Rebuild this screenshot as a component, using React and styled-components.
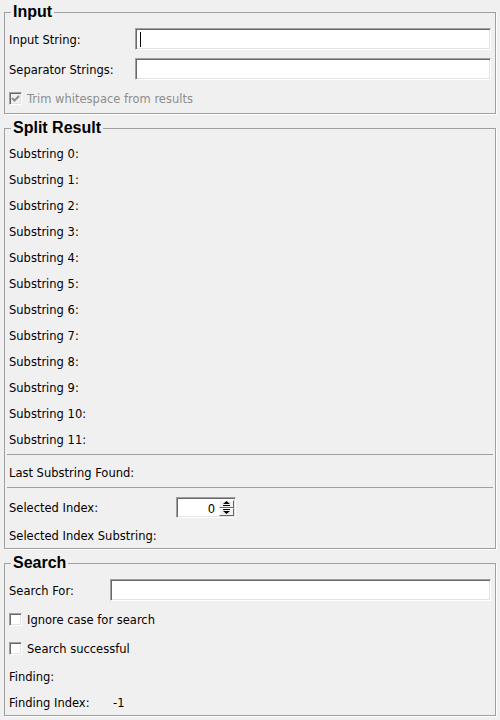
import styled, { createGlobalStyle } from 'styled-components';

const GlobalStyle = createGlobalStyle`
 html, body {
  margin: 0;
  background: #f0f0f0;
 }
 body {
  font-family: 'DejaVu Sans', 'Liberation Sans', sans-serif;
  font-size: 11.5px;
  color: #000;
 }
`;

const Page = styled.div`
 width: 500px;
 height: 720px;
 overflow: hidden;
 padding-top: 3px;
 box-sizing: border-box;
`;

/* group box with an etched border */
const Group = styled.fieldset`
 margin: ${({ $mt }) => $mt || 0}px 4px 0;
 padding: 3px 0 ${({ $pb }) => $pb || 0}px;
 min-width: 0;
 border: 1px solid #a0a0a0;
 box-shadow: 1px 1px 0 #fff;
`;

const Legend = styled.legend`
 font-family: 'Liberation Sans', Arial, sans-serif;
 font-weight: 700;
 font-size: 16px;
 line-height: 18px;
 padding: 0 2px;
 margin-left: 6px;
`;

const Row = styled.div`
 display: flex;
 align-items: center;
 height: ${({ $h }) => $h || 26}px;
 padding-left: 4px;
 padding-right: 4px;
 white-space: nowrap;
`;

const Label = styled.span`
 width: ${({ $w }) => ($w ? `${$w}px` : 'auto')};
 flex-shrink: 0;
 margin-top: 2px;
`;

const Sunken = styled.div`
 box-sizing: border-box;
 background: #fff;
 border: 1px solid;
 border-color: #a0a0a0 #fff #fff #a0a0a0;
 box-shadow: inset 1px 1px 0 #696969, inset -1px -1px 0 #e3e3e3;
`;

const Field = styled(Sunken)`
 flex: 1;
 height: 22px;
 display: flex;
 align-items: center;
 padding-left: 4px;
`;

const Caret = styled.span`
 width: 1px;
 height: 15px;
 background: #000;
`;

const Box = styled(Sunken)`
 width: 13px;
 height: 13px;
 flex-shrink: 0;
 margin-right: 5px;
 display: flex;
 align-items: center;
 justify-content: center;
 background: ${({ $disabled }) => ($disabled ? '#f0f0f0' : '#fff')};
`;

const CheckText = styled.span`
 margin-top: 2px;
 color: ${({ $disabled }) => ($disabled ? '#8d8d8d' : '#000')};
`;

const Divider = styled.hr`
 margin: 2px 2px ${({ $mb }) => $mb || 0}px;
 border: 0;
 height: 1px;
 background: #a0a0a0;
`;

const Spin = styled(Sunken)`
 width: 60px;
 height: 21px;
 display: flex;
 padding: 2px 1px 1px 2px;
`;

const SpinValue = styled.span`
 flex: 1;
 text-align: right;
 padding-right: 4px;
 line-height: 18px;
`;

const SpinButtons = styled.div`
 width: 15px;
 display: flex;
 flex-direction: column;
`;

const SpinButton = styled.div`
 flex: 1;
 box-sizing: border-box;
 background: #f0f0f0;
 border: 1px solid;
 border-color: #fff #696969 #696969 #fff;
 display: flex;
 align-items: center;
 justify-content: center;
`;

const Value = styled.span`
 margin-top: 2px;
`;

const Check = ({ checked, disabled, h = 28, children }) => (
 <Row $h={h}>
  <Box $disabled={disabled}>
   {checked && (
    <svg width="9" height="9" viewBox="0 0 9 9">
     <polyline points="1,4 3.5,6.5 8,2" fill="none" stroke={disabled ? '#8d8d8d' : '#000'} strokeWidth="2" />
    </svg>
   )}
  </Box>
  <CheckText $disabled={disabled}>{children}</CheckText>
 </Row>
);

const App = () => {
 const substrings = Array.from({ length: 12 }, (_, i) => i);
 return (
  <Page>
   <GlobalStyle />
   <Group $mt={0} $pb={1}>
    <Legend>Input</Legend>
    <Row $h={30}>
     <Label $w={126}>Input String:</Label>
     <Field>
      <Caret />
     </Field>
    </Row>
    <Row $h={30}>
     <Label $w={126}>Separator Strings:</Label>
     <Field />
    </Row>
    <Check checked disabled>
     Trim whitespace from results
    </Check>
   </Group>

   <Group $mt={5}>
    <Legend>Split Result</Legend>
    {substrings.map((i) => (
     <Row key={i}>
      <Label>Substring {i}:</Label>
     </Row>
    ))}
    <Divider $mb={4} />
    <Row>
     <Label>Last Substring Found:</Label>
    </Row>
    <Divider $mb={4} />
    <Row $h={30}>
     <Label $w={167}>Selected Index:</Label>
     <Spin>
      <SpinValue>0</SpinValue>
      <SpinButtons>
       <SpinButton>
        <svg width="7" height="5" viewBox="0 0 7 5">
         <polygon points="3.5,0 7,3 0,3" fill="#000" />
         <rect x="0" y="4" width="7" height="1" fill="#000" />
        </svg>
       </SpinButton>
       <SpinButton>
        <svg width="7" height="5" viewBox="0 0 7 5">
         <rect x="0" y="0" width="7" height="1" fill="#000" />
         <polygon points="0,2 7,2 3.5,5" fill="#000" />
        </svg>
       </SpinButton>
      </SpinButtons>
     </Spin>
    </Row>
    <Row>
     <Label>Selected Index Substring:</Label>
    </Row>
   </Group>

   <Group $mt={5}>
    <Legend>Search</Legend>
    <Row $h={30}>
     <Label $w={101}>Search For:</Label>
     <Field />
    </Row>
    <Check>Ignore case for search</Check>
    <Check h={30}>Search successful</Check>
    <Row>
     <Label>Finding:</Label>
    </Row>
    <Row>
     <Label $w={104}>Finding Index:</Label>
     <Value>-1</Value>
    </Row>
   </Group>
  </Page>
 );
};

export default App;
